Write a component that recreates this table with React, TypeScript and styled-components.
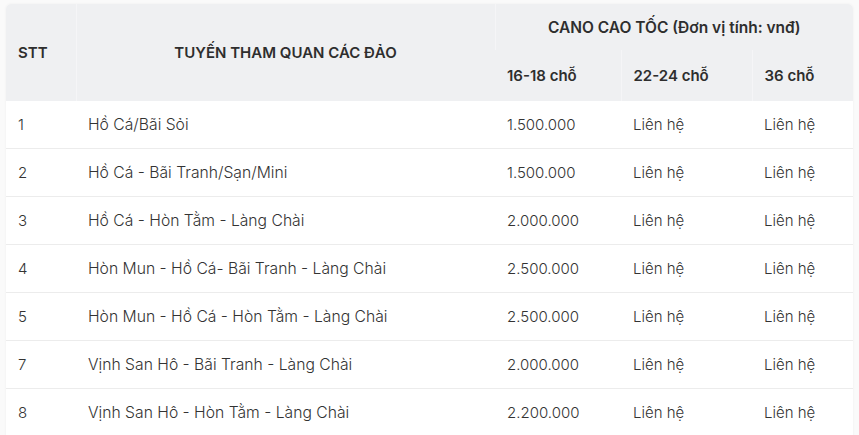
import React from "react";
import styled, { createGlobalStyle } from "styled-components";

const GlobalStyle = createGlobalStyle`
  html, body {
    margin: 0;
    padding: 0;
    background: #ffffff;
  }
  body {
    font-family: "Inter", "Noto Sans", sans-serif;
    color: #333333;
  }
`;

const Page = styled.div`
  padding: 4px 6px;
  background: #fafafa;
`;

const Table = styled.table`
  width: 847px;
  border-collapse: collapse;
  table-layout: fixed;
  background: #ffffff;
  border-radius: 5px 5px 0 0;
  overflow: hidden;
  box-shadow: 0 0 3px rgba(0, 0, 0, 0.05);
`;

const Head = styled.thead`
  background: #eff0f2;
`;

const HeadCell = styled.th<{ $align?: "left" | "center"; $h?: number; $size?: number }>`
  height: ${(p) => p.$h ?? 46}px;
  padding: 0 12px;
  font-size: ${(p) => p.$size ?? 15}px;
  font-weight: 600;
  color: #2e2e2e;
  text-align: ${(p) => p.$align ?? "left"};
  vertical-align: middle;
  white-space: nowrap;
  border-left: 1px solid #f5f5f7;
  &:first-child {
    border-left: none;
  }
`;

const Row = styled.tr`
  border-bottom: 1px solid #ececec;
  &:last-child {
    border-bottom: none;
  }
`;

const Cell = styled.td<{ $wide?: boolean }>`
  height: 47px;
  padding: 0 12px;
  font-size: ${(p) => (p.$wide ? 15.7 : 15)}px;
  font-weight: 300;
  color: #333333;
  vertical-align: middle;
  white-space: nowrap;
`;

const rows: [string, string, string, string, string][] = [
  ["1", "Hồ Cá/Bãi Sỏi", "1.500.000", "Liên hệ", "Liên hệ"],
  ["2", "Hồ Cá - Bãi Tranh/Sạn/Mini", "1.500.000", "Liên hệ", "Liên hệ"],
  ["3", "Hồ Cá - Hòn Tằm - Làng Chài", "2.000.000", "Liên hệ", "Liên hệ"],
  ["4", "Hòn Mun - Hồ Cá- Bãi Tranh - Làng Chài", "2.500.000", "Liên hệ", "Liên hệ"],
  ["5", "Hòn Mun - Hồ Cá - Hòn Tằm - Làng Chài", "2.500.000", "Liên hệ", "Liên hệ"],
  ["7", "Vịnh San Hô - Bãi Tranh - Làng Chài", "2.000.000", "Liên hệ", "Liên hệ"],
  ["8", "Vịnh San Hô - Hòn Tằm - Làng Chài", "2.200.000", "Liên hệ", "Liên hệ"],
];

export default function App() {
  return (
    <>
      <GlobalStyle />
      <Page>
        <Table>
          <colgroup>
            <col style={{ width: 70 }} />
            <col style={{ width: 419 }} />
            <col style={{ width: 126 }} />
            <col style={{ width: 131 }} />
            <col style={{ width: 101 }} />
          </colgroup>
          <Head>
            <tr>
              <HeadCell rowSpan={2}>STT</HeadCell>
              <HeadCell rowSpan={2} $align="center">
                TUYẾN THAM QUAN CÁC ĐẢO
              </HeadCell>
              <HeadCell colSpan={3} $align="center" $size={15.5}>
                CANO CAO TỐC (Đơn vị tính: vnđ)
              </HeadCell>
            </tr>
            <tr>
              <HeadCell $h={51}>16-18 chỗ</HeadCell>
              <HeadCell $h={51}>22-24 chỗ</HeadCell>
              <HeadCell $h={51}>36 chỗ</HeadCell>
            </tr>
          </Head>
          <tbody>
            {rows.map((r) => (
              <Row key={r[0]}>
                {r.map((c, i) => (
                  <Cell key={i} $wide={i === 1}>
                    {c}
                  </Cell>
                ))}
              </Row>
            ))}
          </tbody>
        </Table>
      </Page>
    </>
  );
}
